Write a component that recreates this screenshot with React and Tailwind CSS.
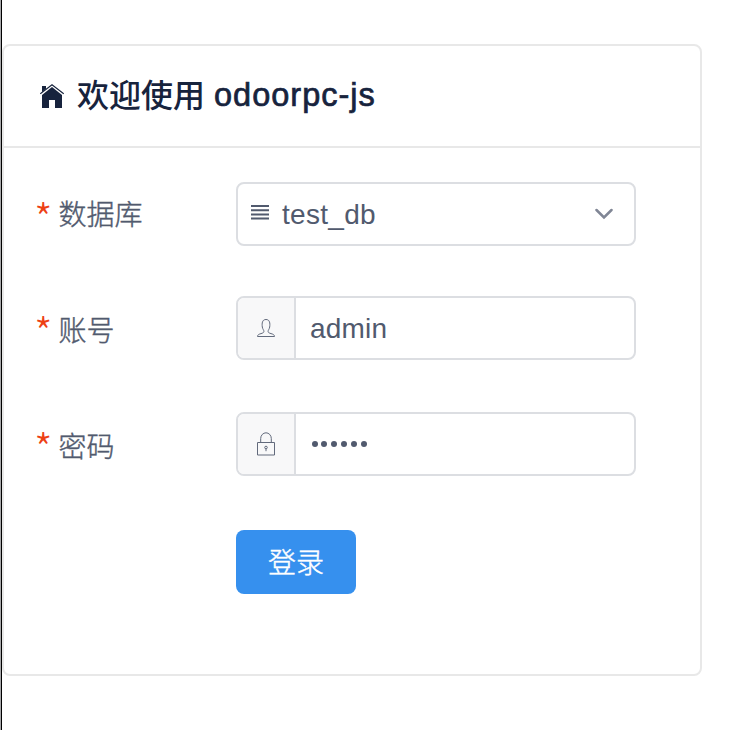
function HomeIcon() {
  return (
    <svg width="24" height="24" viewBox="0 0 24 24" fill="#17233d" className="block shrink-0">
      <path d="M2 2h4v2.8L2 8.2z" />
      <path d="M12 3 22 11v13h-7v-8H9v8H2V11z" />
      <path d="M.3 9.8 12 .7l11.7 9.1" fill="none" stroke="#17233d" strokeWidth="1.1" />
    </svg>
  );
}

function ListIcon() {
  return (
    <svg width="18" height="15" viewBox="0 0 18 15" fill="#515a6e" className="mb-[3px] block shrink-0">
      <path d="M0 0h18v2H0zM0 4.200h18v2H0zM0 8.400h18v2H0zM0 12.600h18v2H0z" />
    </svg>
  );
}

function PersonIcon() {
  return (
    <svg width="18" height="20" viewBox="0 0 18 20" fill="none" stroke="#626a7c" strokeWidth="1" className="block">
      <path d="M.5 18.5h17c-.2-2-1.500-2.300-3.500-2.900-2-.6-2.900-1-2.900-2.200 0-1.400 1.300-2.300 1.600-4.400.5-3.800.1-7.500-3.700-7.500S4.800 5.200 5.300 9c.3 2.100 1.600 3 1.600 4.400 0 1.200-.9 1.600-2.900 2.200-2 .6-3.300.9-3.500 2.900z" />
    </svg>
  );
}

function LockIcon() {
  return (
    <svg width="18" height="24" viewBox="0 0 18 24" fill="none" stroke="#626a7c" strokeWidth="1" className="block">
      <path d="M.5 10.500h17v12.500H.5zM3.700 10.500V6.500a5.300 5.700 0 0 1 10.600 0v4" />
      <circle cx="9" cy="15.500" r="1.300" />
      <path d="M9 16.500v2.700" />
    </svg>
  );
}

function Field({ label, children, className, labelClass }) {
  return (
    <div className={"flex h-16 " + className}>
      <div className="flex w-[200px] items-center">
        <span className="-ml-[2px] w-[24.500px] pt-[6px] text-[42px] leading-none font-light text-[#ed4014] font-['Noto_Sans_CJK_SC',sans-serif]">*</span>
        <span className={"text-[28px] leading-none font-light [-webkit-text-stroke:0.4px_#515a6e] font-['Noto_Sans_CJK_SC',sans-serif] " + labelClass}>{label}</span>
      </div>
      <div className="flex w-[400px] overflow-hidden rounded-lg border-2 border-[#dcdee2] bg-white">{children}</div>
    </div>
  );
}

function Prepend({ children }) {
  return (
    <div className="flex w-[58px] shrink-0 items-center justify-center border-r-2 border-[#dcdee2] bg-[#f8f8f9]">
      {children}
    </div>
  );
}

export default function App() {
  return (
    <div className="flex h-[730px] w-[744px] overflow-hidden bg-white text-[#515a6e] font-['Liberation_Sans','Noto_Sans_CJK_SC',sans-serif]">
      <div className="w-px shrink-0 bg-[#a8a8aa]" />
      <div className="w-px shrink-0 bg-black" />
      <div className="mt-11 h-[632px] w-[700px] shrink-0 rounded-lg border-2 border-[#e8e8e8]">
        <div className="flex h-[102px] items-center border-b-2 border-[#e8e8e8] pl-9 text-[#17233d]">
          <HomeIcon />
          <span className="ml-[13px] pb-[7px] text-[32px] leading-none font-medium font-['Noto_Sans_CJK_SC',sans-serif]">欢迎使用</span>
          <span className="ml-[9px] pb-px text-[32.500px] leading-none tracking-[1px] [-webkit-text-stroke:0.7px_#17233d]">odoorpc-js</span>
        </div>
        <div className="pl-8 pt-[34px]">
          <Field label="数据库" className="" labelClass="pb-[3px]">
            <div className="flex grow items-center pl-[13px] pr-[21px]">
              <ListIcon />
              <span className="ml-[13px] grow pt-px text-[28px] leading-none tracking-[0.3px]">test_db</span>
              <svg width="18" height="12" viewBox="0 0 18 12" fill="none" stroke="#808695" strokeWidth="2.5" strokeLinecap="round" className="block">
                <path d="m1.500 2 7.500 7.500L16.500 2" />
              </svg>
            </div>
          </Field>
          <Field label="账号" className="mt-[50px]" labelClass="pt-px">
            <Prepend><PersonIcon /></Prepend>
            <span className="self-center pl-[14px] pt-px text-[28px] leading-none tracking-[0.2px]">admin</span>
          </Field>
          <Field label="密码" className="mt-[52px]" labelClass="pt-px">
            <Prepend><LockIcon /></Prepend>
            <div className="flex items-center gap-[3.900px] pl-[15.500px]">
              {[0, 1, 2, 3, 4, 5].map((i) => (
                <span key={i} className="size-1.5 rounded-full bg-[#515a6e]" />
              ))}
            </div>
          </Field>
          <button className="ml-[200px] mt-[54px] flex h-16 w-[120px] items-center justify-center rounded-lg bg-[#3690ee] pb-[3px] text-[28px] leading-none font-light text-white [-webkit-text-stroke:0.4px_#fff] font-['Noto_Sans_CJK_SC',sans-serif]">
            登录
          </button>
        </div>
      </div>
    </div>
  );
}
